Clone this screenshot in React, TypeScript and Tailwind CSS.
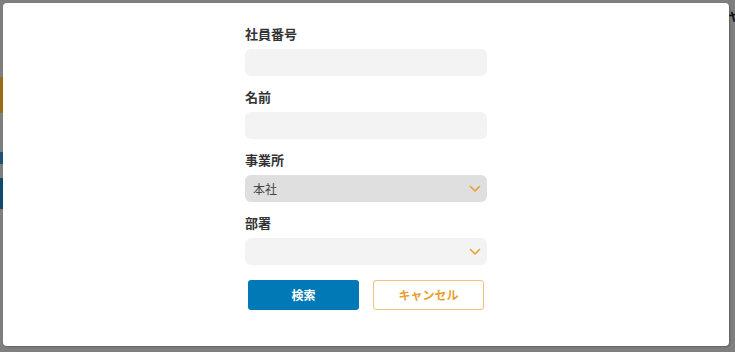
import React from "react";

const Chevron = () => (
  <svg width="12" height="8" viewBox="0 0 12 8" className="absolute right-[6px] top-1/2 -translate-y-1/2">
    <path d="M1.5 1.5 L6 6 L10.5 1.5" fill="none" stroke="#e8a030" strokeWidth="1.6" strokeLinecap="round" strokeLinejoin="round" />
  </svg>
);

const Label = ({ children }: { children: React.ReactNode }) => (
  <div className="text-[13px] leading-[20px] font-bold text-[#333333] mb-[5px]">{children}</div>
);

export default function App() {
  return (
    <div
      className="relative w-[735px] h-[352px] overflow-hidden bg-[#7f7f7f]"
      style={{ fontFamily: '"Noto Sans CJK JP", "Noto Sans", sans-serif' }}
    >
      {/* dimmed page content behind the overlay */}
      <div className="absolute left-0 top-[77px] w-[3px] h-[36px] bg-[#9a6c17]" />
      <div className="absolute left-0 top-[152px] w-[3px] h-[12px] bg-[#1f5275]" />
      <div className="absolute left-0 top-[178px] w-[3px] h-[31px] bg-[#0f4a70]" />
      <div className="absolute left-[727px] top-[4px] text-[14px] leading-[20px] font-bold text-[#111111]">ャ</div>

      {/* modal */}
      <div className="absolute left-[3px] top-[3px] w-[726px] h-[343px] bg-white rounded-[4px] shadow-[1px_1px_2px_rgba(0,0,0,0.25)] flex justify-center">
        <div className="w-[242px] pt-[21px] flex flex-col gap-[11px]">
          <div>
            <Label>社員番号</Label>
            <div className="h-[27px] rounded-[6px] bg-[#f3f3f3]" />
          </div>
          <div>
            <Label>名前</Label>
            <div className="h-[27px] rounded-[6px] bg-[#f3f3f3]" />
          </div>
          <div>
            <Label>事業所</Label>
            <div className="relative h-[27px] rounded-[6px] bg-[#dfdfdf] flex items-center pl-[8px] text-[12px] text-[#444444]">
              本社
              <Chevron />
            </div>
          </div>
          <div>
            <Label>部署</Label>
            <div className="relative h-[27px] rounded-[6px] bg-[#f3f3f3]">
              <Chevron />
            </div>
          </div>
          <div className="flex justify-center gap-[14px] mt-[4px]">
            <button className="w-[111px] h-[30px] rounded-[3px] bg-[#0079b6] text-white text-[12px] font-bold">
              検索
            </button>
            <button className="w-[111px] h-[30px] rounded-[3px] bg-white border border-[#f2c27a] text-[#e8a030] text-[12px] font-bold">
              キャンセル
            </button>
          </div>
        </div>
      </div>
    </div>
  );
}
